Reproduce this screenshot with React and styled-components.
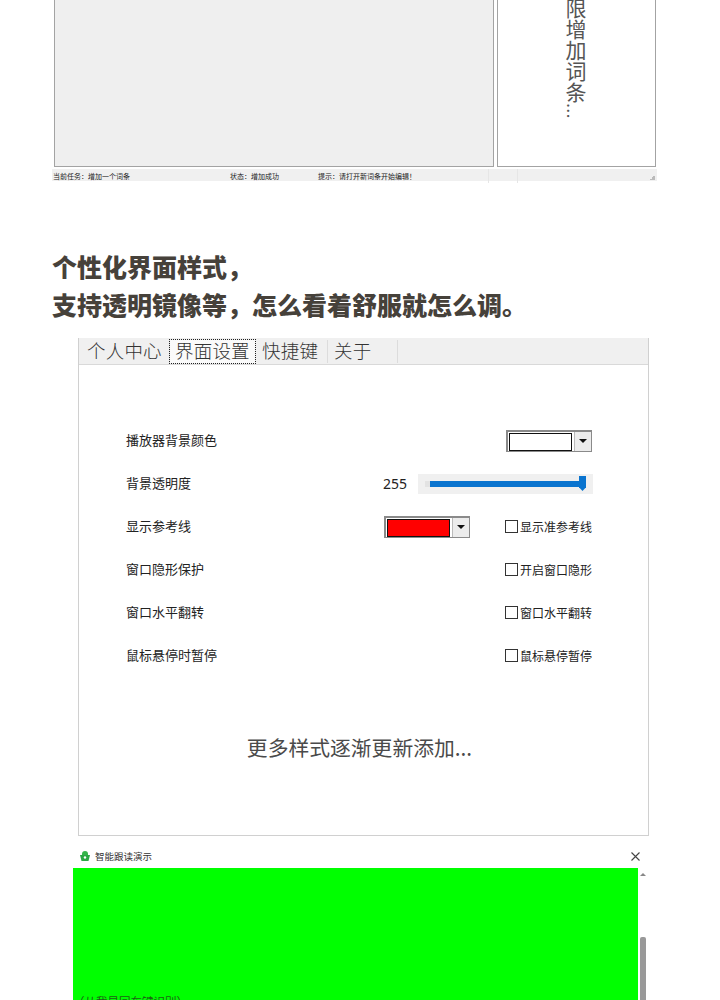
import React from "react";
import styled, { createGlobalStyle } from "styled-components";

const sans = `"Noto Sans CJK SC", "Noto Sans", sans-serif`;

const GlobalStyle = createGlobalStyle`
  html, body {
    margin: 0;
    padding: 0;
    background: #fff;
  }
  body {
    height: 1000px;
    overflow: hidden;
    font-family: ${sans};
  }
  * {
    box-sizing: border-box;
  }
`;

const Page = styled.div`
  width: 720px;
  height: 1000px;
  overflow: hidden;
  display: flex;
  flex-direction: column;
`;

/* top editor window, cut by the top of the page */
const Editor = styled.section`
  margin-left: 52px;
  width: 605px;
  display: flex;
  flex-direction: column;
`;

const EditorPanes = styled.div`
  height: 167px;
  padding-left: 2px;
  display: flex;
  gap: 3px;
  width: 604px;
`;

const Canvas = styled.div`
  width: 440px;
  background: #efefef;
  border: 1px solid #a3a3a3;
  border-top: none;
`;

const SidePane = styled.div`
  width: 159px;
  border: 1px solid #a3a3a3;
  border-top: none;
  display: flex;
  justify-content: center;
  align-items: flex-end;
  padding: 0 0 47px 0;
  overflow: hidden;
`;

const VerticalText = styled.div`
  writing-mode: vertical-rl;
  text-orientation: upright;
  font-size: 21px;
  line-height: 22px;
  font-weight: 400;
  color: #555;
  white-space: nowrap;
  margin-right: 1px;
`;

const Dots = styled.span`
  text-orientation: mixed;
  font-weight: 300;
`;

const StatusBar = styled.div`
  margin-top: 2px;
  height: 12px;
  background: #f0f0f0;
  display: grid;
  grid-template-columns: 177px 88px 172px 29px 1fr;
  position: relative;
  font-size: 7px;
  line-height: 14px;
  color: #222;
`;

const StatusCell = styled.span`
  white-space: nowrap;
  padding-left: 1px;
  border-right: ${(p) => (p.$divider ? "1px solid #e6e6e6" : "none")};
`;

const Grip = styled.i`
  position: absolute;
  right: 2px;
  bottom: 1px;
  width: 5px;
  height: 5px;
  background: linear-gradient(135deg, transparent 50%, #bbb 50%);
`;

const Heading = styled.h1`
  margin: 66px 0 0 52px;
  font-size: 25px;
  line-height: 38px;
  font-weight: 900;
  color: #46413a;
  white-space: nowrap;
`;

/* settings dialog */
const Settings = styled.section`
  margin: 15px 0 0 78px;
  width: 571px;
  height: 498px;
  border: 1px solid #d0d0d0;
  border-top: none;
  display: flex;
  flex-direction: column;
`;

const TabBar = styled.div`
  height: 27px;
  background: #f0f0f0;
  border-bottom: 1px solid #d9d9d9;
  display: flex;
  align-items: stretch;
  padding: 2px 0 1px 2px;
`;

const Tab = styled.div`
  width: ${(p) => p.$w}px;
  margin-right: ${(p) => (p.$active ? 1 : 0)}px;
  padding-left: ${(p) => (p.$active ? 5 : 6)}px;
  font-size: 18.5px;
  line-height: 21px;
  font-weight: 300;
  letter-spacing: 0.2px;
  color: #333;
  white-space: nowrap;
  border-right: ${(p) => (p.$active ? "none" : "1px solid #dcdcdc")};
  outline: ${(p) => (p.$active ? "1px dotted #222" : "none")};
  background: ${(p) => (p.$active ? "#fafafa" : "transparent")};
`;

const Form = styled.div`
  margin-top: 54px;
  padding-left: 47px;
  display: grid;
  grid-template-columns: 257px 122px 87px;
  grid-auto-rows: 43px;
  align-items: center;
`;

const Label = styled.div`
  grid-column: 1;
  font-size: 13px;
  line-height: 16px;
  padding-bottom: 1px;
  color: #222;
  white-space: nowrap;
`;

const SliderRow = styled.div`
  grid-column: 2 / 4;
  display: flex;
  align-items: center;
  font-family: "Noto Sans", sans-serif;
  font-size: 14px;
  color: #222;
`;

const SliderValue = styled.span`
  width: 35px;
  flex: none;
`;

const SliderTrack = styled.div`
  width: 175px;
  flex: none;
  height: 20px;
  background: #f0f0f0;
  display: flex;
  align-items: center;
  padding: 0 7px 0 7px;
`;

const SliderFill = styled.div`
  flex: 1;
  height: 6px;
  margin-left: 5px;
  background: #0a74cf;
  box-shadow: -5px 0 0 #e3e3e3;
`;

const SliderThumb = styled.div`
  width: 7px;
  height: 15px;
  margin-left: -1px;
  background: #0a74cf;
  clip-path: polygon(0 0, 100% 0, 100% 75%, 50% 100%, 0 75%);
`;

const ColorCombo = styled.div`
  grid-column: ${(p) => p.$column};
  justify-self: ${(p) => (p.$column === 3 ? "end" : "start")};
  margin-left: ${(p) => (p.$column === 2 ? 1 : 0)}px;
  width: 86px;
  height: 22px;
  border: 1px solid #8a8a8a;
  border-top-width: 2px;
  border-left-width: 2px;
  display: flex;
  align-items: stretch;
  padding: 1px 0 0 1px;
  background: #fff;
`;

const Swatch = styled.div`
  width: 63px;
  height: 18px;
  background: ${(p) => p.$color};
  border: 1px solid #111;
`;

const ComboArrow = styled.div`
  margin-left: 2px;
  flex: 1;
  margin-top: -1px;
  background: #ececec;
  border-left: 1px solid #bbb;
  display: flex;
  align-items: center;
  justify-content: center;
  &::after {
    content: "";
    border-left: 4px solid transparent;
    border-right: 4px solid transparent;
    border-top: 4px solid #111;
  }
`;

const Check = styled.label`
  grid-column: 3;
  width: 87px;
  overflow: hidden;
  display: flex;
  align-items: center;
  font-size: 12px;
  color: #222;
  white-space: nowrap;
`;

const CheckBox = styled.span`
  flex: none;
  width: 13px;
  height: 13px;
  margin-right: 2px;
  border: 1px solid #333;
  background: #fff;
`;

const MoreNote = styled.div`
  margin-top: 55px;
  text-align: center;
  font-size: 20.8px;
  line-height: 30px;
  color: #4a4a4a;
  padding-right: 8px;
`;

/* follow-read window */
const Reader = styled.section`
  margin: 9px 0 0 73px;
  width: 575px;
  display: flex;
  flex-direction: column;
  flex: 1;
  min-height: 0;
`;

const ReaderTitle = styled.div`
  height: 23px;
  display: flex;
  align-items: center;
  padding: 0 0 1px 6px;
  gap: 4px;
  font-size: 9.5px;
  color: #333;
`;

const CloseButton = styled.svg`
  margin-left: auto;
  margin-right: 8px;
  width: 9px;
  height: 9px;
`;

const ReaderBody = styled.div`
  flex: 1;
  min-height: 0;
  display: flex;
  gap: 2px;
`;

const GreenScreen = styled.div`
  width: 565px;
  background: #00ff00;
  display: flex;
  flex-direction: column;
  justify-content: flex-end;
  overflow: hidden;
`;

const GreenLine = styled.div`
  font-size: 11.5px;
  line-height: 11px;
  color: #1f5f16;
  height: 4px;
  white-space: nowrap;
`;

const ScrollBar = styled.div`
  width: 6px;
  display: flex;
  flex-direction: column;
  align-items: center;
`;

const ScrollUp = styled.div`
  margin-top: 5px;
  border-left: 3px solid transparent;
  border-right: 3px solid transparent;
  border-bottom: 3px solid #888;
`;

const ScrollThumb = styled.div`
  margin-top: 61px;
  width: 6px;
  flex: 1;
  border-radius: 2px 2px 0 0;
  background: #999;
`;

const tabs = [
  { name: "个人中心", w: 89 },
  { name: "界面设置", w: 85, active: true },
  { name: "快捷键", w: 72 },
  { name: "关于", w: 70 },
];

const options = [
  { label: "窗口隐形保护", check: "开启窗口隐形" },
  { label: "窗口水平翻转", check: "窗口水平翻转" },
  { label: "鼠标悬停时暂停", check: "鼠标悬停暂停" },
];

function ReaderIcon() {
  return (
    <svg width="12" height="12" viewBox="0 0 12 12">
      <path d="M3 4a3 3 0 0 1 6 0v1H3z" fill="#35b54a" />
      <path d="M1 5h10L9.5 11h-7z" fill="#2ca845" />
      <circle cx="6" cy="7.5" r="1.2" fill="#fff" />
    </svg>
  );
}

export default function App() {
  return (
    <Page>
      <GlobalStyle />
      <Editor>
        <EditorPanes>
          <Canvas />
          <SidePane>
            <VerticalText>
              限增加词条<Dots>...</Dots>
            </VerticalText>
          </SidePane>
        </EditorPanes>
        <StatusBar>
          <StatusCell>当前任务：增加一个词条</StatusCell>
          <StatusCell>状态：增加成功</StatusCell>
          <StatusCell $divider>提示：请打开新词条开始编辑！</StatusCell>
          <StatusCell $divider />
          <StatusCell />
          <Grip />
        </StatusBar>
      </Editor>

      <Heading>
        个性化界面样式，
        <br />
        支持透明镜像等，怎么看着舒服就怎么调。
      </Heading>

      <Settings>
        <TabBar>
          {tabs.map((t) => (
            <Tab key={t.name} $w={t.w} $active={t.active}>
              {t.name}
            </Tab>
          ))}
        </TabBar>
        <Form>
          <Label>播放器背景颜色</Label>
          <ColorCombo $column={3}>
            <Swatch $color="#fff" />
            <ComboArrow />
          </ColorCombo>

          <Label>背景透明度</Label>
          <SliderRow>
            <SliderValue>255</SliderValue>
            <SliderTrack>
              <SliderFill />
              <SliderThumb />
            </SliderTrack>
          </SliderRow>

          <Label>显示参考线</Label>
          <ColorCombo $column={2}>
            <Swatch $color="#ff0000" />
            <ComboArrow />
          </ColorCombo>
          <Check>
            <CheckBox />
            显示准参考线
          </Check>

          {options.map((o) => (
            <React.Fragment key={o.label}>
              <Label>{o.label}</Label>
              <Check>
                <CheckBox />
                {o.check}
              </Check>
            </React.Fragment>
          ))}
        </Form>
        <MoreNote>更多样式逐渐更新添加...</MoreNote>
      </Settings>

      <Reader>
        <ReaderTitle>
          <ReaderIcon />
          智能跟读演示
          <CloseButton viewBox="0 0 9 9">
            <path d="M0.5 0.5l8 8M8.5 0.5l-8 8" stroke="#444" strokeWidth="1.1" />
          </CloseButton>
        </ReaderTitle>
        <ReaderBody>
          <GreenScreen>
            <GreenLine>（从我是回车键识别）</GreenLine>
          </GreenScreen>
          <ScrollBar>
            <ScrollUp />
            <ScrollThumb />
          </ScrollBar>
        </ReaderBody>
      </Reader>
    </Page>
  );
}
